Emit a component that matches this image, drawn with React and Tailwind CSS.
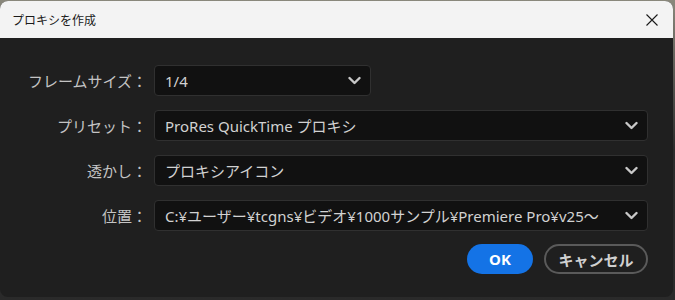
import React from "react";

const font = { fontFamily: '"Noto Sans", "Noto Sans CJK JP", sans-serif' };
const jp = { fontFamily: '"Noto Sans CJK JP", "Noto Sans", sans-serif' };

function Chevron() {
  return (
    <svg width="13" height="9" viewBox="0 0 13 9" className="shrink-0">
      <polyline points="1.5,2 6.5,7 11.5,2" fill="none" stroke="#c8c8c8" strokeWidth="2.4" strokeLinecap="round" strokeLinejoin="round" />
    </svg>
  );
}

function Row({ label, value, narrow }) {
  return (
    <div className="flex items-center h-[31px]">
      <div className="w-[147px] text-right text-[15px] text-[#c4c4c4] whitespace-nowrap leading-[20px]" style={jp}>{label}</div>
      <div
        className={
          (narrow ? "w-[217px] " : "w-[494px] ") +
          "ml-[7px] h-[31px] flex items-center justify-between bg-[#111111] border border-[#303030] rounded-[4px] pl-[10px] pr-[9px]"
        }
      >
        <span className="text-[15px] text-[#d2d2d2] whitespace-nowrap overflow-hidden leading-[20px]">{value}</span>
        <Chevron />
      </div>
    </div>
  );
}

export default function App() {
  return (
    <div className="w-[675px] h-[300px] bg-linear-to-b from-[#8a887c] via-[#2c2c2c] to-[#2a2a2a] overflow-hidden" style={font}>
      <div className="mt-[1px] w-[673px] h-[296px] rounded-[8px] overflow-hidden flex flex-col bg-[#1f1f1f]">
        <div className="h-[37px] bg-[#f3f3f3] flex items-center justify-between pl-[12px] pr-[15px] shrink-0">
          <span className="text-[12px] text-[#1a1a1a] leading-[16px]" style={jp}>プロキシを作成</span>
          <svg width="12" height="12" viewBox="0 0 12 12">
            <path d="M0.5 0.5 L11.5 11.5 M11.5 0.5 L0.5 11.5" stroke="#1a1a1a" strokeWidth="1.1" fill="none" />
          </svg>
        </div>
        <div className="flex flex-col pt-[27px] gap-[14px]">
          <Row label="フレームサイズ：" value="1/4" narrow />
          <Row label="プリセット：" value="ProRes QuickTime プロキシ" />
          <Row label="透かし：" value="プロキシアイコン" />
          <Row label="位置：" value="C:¥ユーザー¥tcgns¥ビデオ¥1000サンプル¥Premiere Pro¥v25～" />
        </div>
        <div className="flex justify-end gap-[11px] pr-[25px] mt-[13px]">
          <button className="w-[66px] h-[30px] rounded-full bg-[#1473e6] text-white text-[15px] font-bold leading-none flex items-center justify-center">
            OK
          </button>
          <button className="w-[104px] h-[30px] rounded-full border-2 border-[#5a5a5a] text-[#d0d0d0] text-[15px] font-bold leading-none flex items-center justify-center" style={jp}>
            キャンセル
          </button>
        </div>
      </div>
    </div>
  );
}
